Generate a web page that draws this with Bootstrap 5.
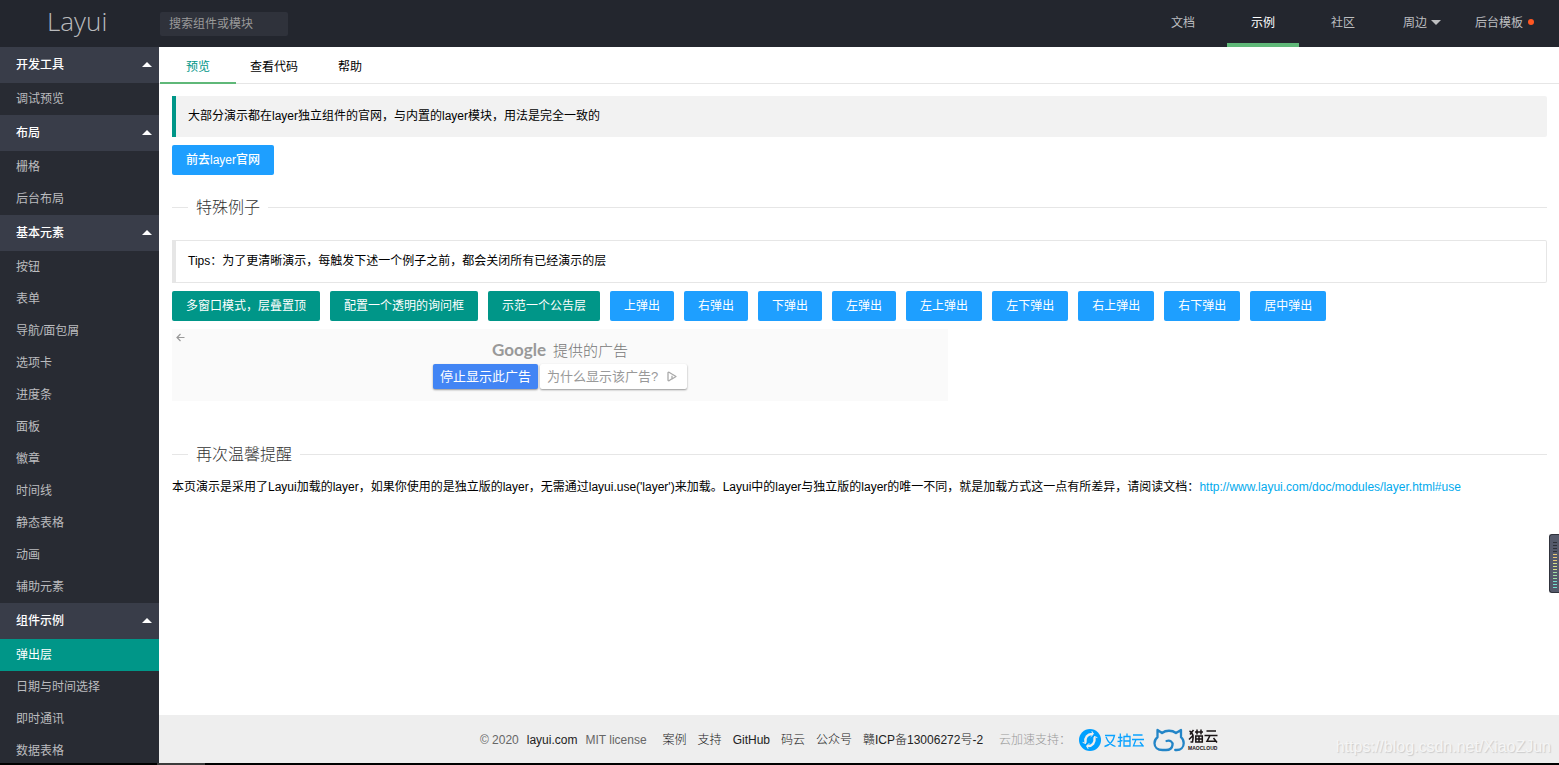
<!DOCTYPE html>
<html lang="zh-CN">
<head>
<meta charset="utf-8">
<meta name="viewport" content="width=device-width, initial-scale=1">
<title>弹出层 - Layui</title>
<link href="https://cdn.jsdelivr.net/npm/bootstrap@5.3.0/dist/css/bootstrap.min.css" rel="stylesheet">
<style>
body{font:12px/24px "Liberation Sans","Noto Sans CJK SC",sans-serif;color:#000;background:#fff}
a{text-decoration:none}
.top-bar{background:#23262e;height:47px}
.brand-cell{width:160px;padding-left:47px;font:300 26px/42px "Open Sans",sans-serif;color:#b9babd;height:47px}
.search-box,.search-box:focus{width:128px;height:24px;background:#2f323b;border:0;border-radius:2px;color:#999;font-size:12px;padding:0 9px;box-shadow:none}
.search-box::placeholder{color:#999;opacity:1}
.top-nav{padding-right:12px}
.top-nav a{display:block;position:relative;line-height:47px;height:47px;padding:0 24px;color:#bdbec0}
.top-nav a.active{color:#fff;border-bottom:4px solid #5fb878}
.top-nav .tri{position:absolute;right:10px;top:20px;border:5px solid transparent;border-top-color:#bdbec0;border-bottom:0}
.top-nav .dot{position:absolute;right:13px;top:19px;width:6px;height:6px;border-radius:50%;background:#ff5722}
.side-bar{width:159px;background:#282b33}
.side-bar h2{position:relative;margin:0;height:36px;padding-left:16px;background:#393d49;color:#fff;font-size:12px;line-height:36px;font-weight:500}
.side-bar h2::after{content:"";position:absolute;right:7px;top:15px;border:5px solid transparent;border-bottom-color:#fff;border-top:0}
.side-bar a{display:block;height:32px;line-height:32px;padding-left:16px;color:#bbbcbf}
.side-bar a.active{background:#009688;color:#fff}
.tab-row{height:37px;border-bottom:1px solid #e6e6e6;padding-left:1px}
.tab-row button{border:0;background:none;color:#000;height:37px;padding:0 20px 0;line-height:40px}
.tab-row button:first-child{padding:0 26px}
.tab-row button.active{color:#009688;border-bottom:2px solid #5fb878}
.tab-row button.second{padding-left:14px}
.pane{padding:12px 12px 12px 13px}
.quote{padding:8px 12px 9px;border-left:4px solid #009688;background:#f2f2f2;border-radius:0 2px 2px 0;margin-bottom:8px}
.quote-line{border:1px solid #e6e6e6;border-left-width:4px;background:#fff}
.btn-lay{--bs-btn-color:#fff;--bs-btn-hover-color:#fff;--bs-btn-border-width:0;--bs-btn-border-radius:2px;height:30px;padding:0 14px;font-size:12px;line-height:31px;background:#009688}
.btn-sky{background:#1e9fff}
.btn-row{gap:8px 10px}
.rule-title{display:flex;align-items:center;gap:8px;margin:0;font-size:16px;line-height:25px;padding-top:1px;font-weight:300;color:#333}
.rule-title::before{content:"";width:16px;border-top:1px solid #e6e6e6}
.rule-title::after{content:"";flex:1;border-top:1px solid #e6e6e6}
.rule-first{margin:19px 0 20px}
.ad-box{position:relative;max-width:776px;height:72px;background:#fafafa;padding-top:9px;margin:8px 0 40px}
.ad-head{gap:7px;font-size:15px;font-weight:300;color:#777;line-height:25px}
.ad-head b{font:700 17px/24px Lato,sans-serif;color:#999}
.ad-row{gap:2px;margin-top:1px}
.ad-box .btn{--bs-btn-border-width:0;--bs-btn-border-radius:2px;font-size:13px;line-height:24px;padding:0 7px;box-shadow:0 1px 2px #0006;background:#fff;color:#999;height:25px}
.ad-box .ad-stop{background:#4285f4;color:#fff}
.ad-box .ad-why{padding-right:9px}
.ad-back{position:absolute;left:4px;top:4px;border:0;background:none;padding:0;line-height:0}
.foot{min-height:48px;background:#eee;color:#666;padding-right:19px;padding-top:2px}
.foot a{color:#222}
.foot .thin{font-weight:300}
.foot .hint{color:#999;font-weight:300}
.foot-links{gap:11px}
.doc-link{color:#01aaed}
.task-strip{height:2px;background:#000}
.task-strip i{width:48px;height:2px;margin-left:157px;background:#3b3b3b}
.watermark{position:absolute;right:8px;bottom:6px;font-size:16px;line-height:24px;color:#f5f5f5;text-shadow:1px 1px 1px #ccc}
.meter{position:absolute;right:0;top:534px;width:10px;height:59px;background:#555a6b;border:1px solid #30333d;border-right:0;border-radius:3px 0 0 3px}
</style>
</head>
<body class="vh-100 d-flex flex-column overflow-hidden position-relative">
<header class="top-bar d-flex align-items-center flex-shrink-0">
  <a href="#" class="brand-cell">Layui</a>
  <input class="form-control search-box" type="text" placeholder="搜索组件或模块" aria-label="搜索组件或模块">
  <nav class="top-nav d-flex ms-auto">
    <a href="#" class="me-2">文档</a>
    <a href="#" class="active me-2">示例</a>
    <a href="#">社区</a>
    <a href="#">周边<span class="tri"></span></a>
    <a href="#">后台模板<span class="dot"></span></a>
  </nav>
</header>
<div class="d-flex flex-grow-1 overflow-hidden">
  <aside class="side-bar flex-shrink-0 overflow-hidden">
    <h2>开发工具</h2>
    <a href="#">调试预览</a>
    <h2>布局</h2>
    <a href="#">栅格</a>
    <a href="#">后台布局</a>
    <h2>基本元素</h2>
    <a href="#">按钮</a>
    <a href="#">表单</a>
    <a href="#">导航/面包屑</a>
    <a href="#">选项卡</a>
    <a href="#">进度条</a>
    <a href="#">面板</a>
    <a href="#">徽章</a>
    <a href="#">时间线</a>
    <a href="#">静态表格</a>
    <a href="#">动画</a>
    <a href="#">辅助元素</a>
    <h2>组件示例</h2>
    <a href="#" class="active">弹出层</a>
    <a href="#">日期与时间选择</a>
    <a href="#">即时通讯</a>
    <a href="#">数据表格</a>
  </aside>
  <div class="d-flex flex-column flex-grow-1 overflow-hidden">
    <div class="tab-row d-flex flex-shrink-0">
      <button type="button" class="active">预览</button>
      <button type="button" class="second">查看代码</button>
      <button type="button">帮助</button>
    </div>
    <main class="pane flex-grow-1">
      <div class="quote">大部分演示都在layer独立组件的官网，与内置的layer模块，用法是完全一致的</div>
      <button type="button" class="btn btn-lay btn-sky fw-medium d-block">前去layer官网</button>
      <h2 class="rule-title rule-first">特殊例子</h2>
      <div class="quote quote-line">Tips：为了更清晰演示，每触发下述一个例子之前，都会关闭所有已经演示的层</div>
      <div class="btn-row d-flex flex-wrap">
        <button type="button" class="btn btn-lay">多窗口模式，层叠置顶</button>
        <button type="button" class="btn btn-lay">配置一个透明的询问框</button>
        <button type="button" class="btn btn-lay">示范一个公告层</button>
        <button type="button" class="btn btn-lay btn-sky">上弹出</button>
        <button type="button" class="btn btn-lay btn-sky">右弹出</button>
        <button type="button" class="btn btn-lay btn-sky">下弹出</button>
        <button type="button" class="btn btn-lay btn-sky">左弹出</button>
        <button type="button" class="btn btn-lay btn-sky">左上弹出</button>
        <button type="button" class="btn btn-lay btn-sky">左下弹出</button>
        <button type="button" class="btn btn-lay btn-sky">右上弹出</button>
        <button type="button" class="btn btn-lay btn-sky">右下弹出</button>
        <button type="button" class="btn btn-lay btn-sky">居中弹出</button>
      </div>
      <section class="ad-box">
        <button type="button" class="ad-back" aria-label="返回"><svg width="9" height="9" viewBox="0 0 9 9" fill="none" stroke="#999" stroke-width="1.2"><path d="M8.5 4.5H1M4.5 1 1 4.5 4.5 8"/></svg></button>
        <div class="ad-head d-flex justify-content-center"><b>Google</b><span>提供的广告</span></div>
        <div class="ad-row d-flex justify-content-center">
          <button type="button" class="btn ad-stop">停止显示此广告</button>
          <button type="button" class="btn ad-why d-flex align-items-center gap-2">为什么显示该广告?<svg width="12" height="11" viewBox="0 0 12 11" fill="none" stroke="#aaa" stroke-width="1.3" stroke-linejoin="round"><path d="M5.500 8 3 9.800 2 9.300V1.700L3 1.200 10 5.500 6 8V4.800M6 2.800v.6"/></svg></button>
        </div>
      </section>
      <h2 class="rule-title mb-2">再次温馨提醒</h2>
      <p class="m-0">本页演示是采用了Layui加载的layer，如果你使用的是独立版的layer，无需通过layui.use('layer')来加载。Layui中的layer与独立版的layer的唯一不同，就是加载方式这一点有所差异，请阅读文档：<a href="#" class="doc-link">http://www.layui.com/doc/modules/layer.html#use</a></p>
    </main>
    <footer class="foot d-flex align-items-center justify-content-center flex-shrink-0">
      <span class="me-2">© 2020</span><a href="#" class="me-2">layui.com</a><span class="me-3">MIT license</span>
      <div class="foot-links d-flex me-3">
        <a href="#" class="thin">案例</a><a href="#" class="thin">支持</a><a href="#">GitHub</a><a href="#" class="thin">码云</a><a href="#" class="thin">公众号</a><a href="#" class="thin">赣ICP备13006272号-2</a>
      </div>
      <span class="hint me-2">云加速支持：</span>
      <a href="#" class="me-2" aria-label="又拍云"><svg width="66" height="24" viewBox="0 0 66 24"><circle cx="11" cy="12" r="11" fill="#00a0ff"/><g fill="none" stroke="#eee" stroke-linecap="round"><path d="M13 6C8.500 6 5.800 9.500 6.500 14M9 18c4.500 0 7.200-3.500 6.500-8" stroke-width="2.400"/><path d="M13 3.500 14.500 6 12 8.500M9 20.500 7.500 18l2.500-2.500M4 14.500l2.500 1M18 9.500l-2.500-1" stroke-width="1"/></g><g fill="none" stroke="#0aa2ff" stroke-width="1.300"><path d="M26 7.500h9.500C34.500 12 31 17 25.500 18.500M27 9c1.500 4 4.500 8 9.500 9.500M39 9.500h4.500M41.300 5.500V18h-2M38.500 13.500l5-1M45 8.500h6v9.500h-6zM45 13h6M48 5.500v3M54 7h9.500M53 11.500h12M57 11.500 54.500 17.800h9M61 14l3.500 4.500"/></g></svg></a>
      <a href="#" aria-label="猫云"><svg width="66" height="26" viewBox="0 0 66 26"><path d="M13.500 14c3.500-1.200 6.500.8 6 4-.4 3-3 5-6.500 5H9.500C4.500 23 1.500 20 1.500 16.200c0-2.800 1.200-4.700 3-6V3l4.500 3c4-3 10-3 14 0l5-3v7.200c1.800 1.500 2.700 3.300 2.700 6 0 4-3 6.800-7 6.800h-1.500" fill="none" stroke="#2385c7" stroke-width="2.300" stroke-linejoin="round" stroke-linecap="round"/><g fill="none" stroke="#1a1415" stroke-width="1.500"><path d="M40.500 3 37 7.500M36.500 4c4 2 4 7 3 11h-2M40 8.500l-4 4M42 5h8M44 2.500v5M48 2.500v5M42.800 9h6.500v6h-6.500zM42.800 12h6.500M46 9v6M53.500 4h9.500M51.500 8.500h13M57 8.500l-3 5.800h9M60.500 11l3.500 4.500"/></g><text x="35" y="23" font-family="Liberation Sans" font-weight="700" font-size="5" fill="#1a1415">MAOCLOUD</text></svg></a>
    </footer>
  </div>
</div>
<div class="task-strip flex-shrink-0 d-flex"><i></i></div>
<div class="watermark">https://blog.csdn.net/XiaoZJun</div>
<div class="meter"><svg class="d-block" width="9" height="57" viewBox="0 0 9 57" fill="none" stroke-width="1"><path d="M3 7.500h4M3 10.500h4M3 13.500h4M3 16.500h4" stroke="#2d3038"/><path d="M3 19.500h4M3 22.500h4M3 25.500h4" stroke="#e8c878"/><path d="M3 28.500h4M3 31.500h4M3 34.500h4" stroke="#d5e08c"/><path d="M3 37.500h4M3 40.500h4M3 43.500h4" stroke="#a0dfa4"/><path d="M3 46.500h4M3 49.500h4M3 52.500h4" stroke="#74e0d0"/></svg></div>
<script src="https://cdn.jsdelivr.net/npm/bootstrap@5.3.0/dist/js/bootstrap.bundle.min.js"></script>
</body>
</html>
